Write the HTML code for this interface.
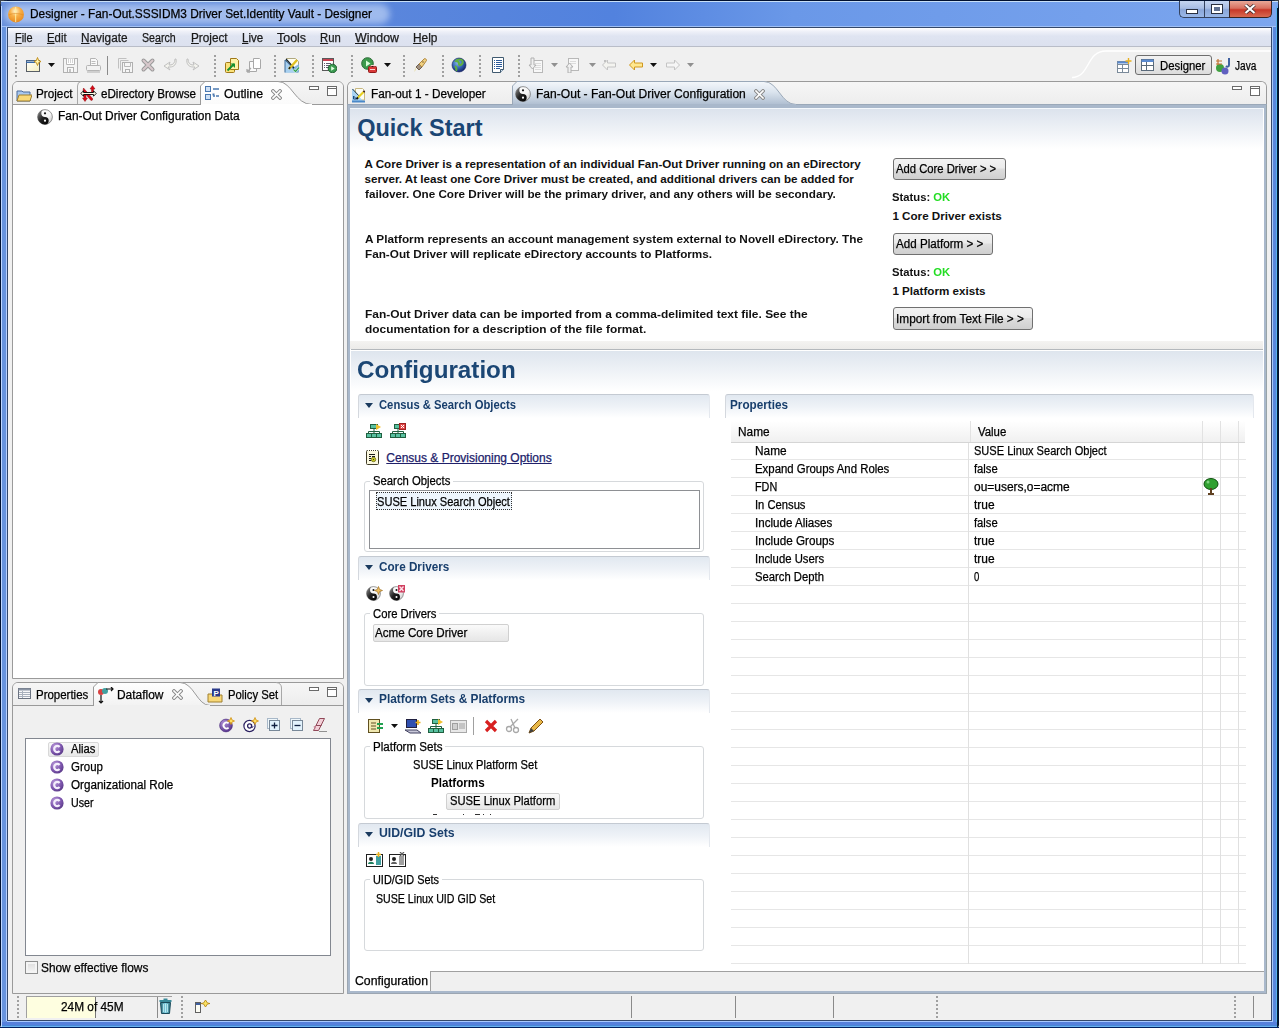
<!DOCTYPE html><html><head><meta charset="utf-8"><style>
html,body{margin:0;padding:0;}
body{width:1279px;height:1028px;overflow:hidden;position:relative;background:#f0f0f0;font-family:"Liberation Sans",sans-serif;}
.a{position:absolute;box-sizing:border-box;}
.t{position:absolute;white-space:pre;line-height:20px;font-family:"Liberation Sans",sans-serif;}
</style></head><body>

<div class="a" style="left:0px;top:0px;width:6px;height:6px;background:#3a4048;"></div>
<div class="a" style="left:1273px;top:0px;width:6px;height:6px;background:#3a4048;"></div>
<div class="a" style="left:0px;top:0px;width:1279px;height:1028px;background:#6292e0;border:1px solid #001030;border-radius:7px 7px 3px 3px;"></div>
<div class="a" style="left:1px;top:1px;width:1277px;height:1px;background:#c8e0f8;"></div>
<div class="a" style="left:1px;top:2px;width:1277px;height:24px;background:linear-gradient(90deg,#6890dc 0%,#5a86dc 30%,#5282de 48%,#6a98e8 62%,#74a0ec 85%,#7ca6ee 100%);"></div>
<div class="a" style="left:1px;top:26px;width:1277px;height:1px;background:#a0c0f4;"></div>
<div class="a" style="left:1px;top:6px;width:1px;height:1021px;background:#c0d8ff;"></div>
<div class="a" style="left:2px;top:27px;width:4px;height:1000px;background:#6894de;"></div>
<div class="a" style="left:6px;top:27px;width:1px;height:994px;background:#b8d0ff;"></div>
<div class="a" style="left:1272px;top:27px;width:1px;height:994px;background:#a8c8f8;"></div>
<div class="a" style="left:1273px;top:27px;width:3px;height:1000px;background:#5a88dc;"></div>
<div class="a" style="left:1276px;top:6px;width:1px;height:1021px;background:#58b0f0;"></div>
<div class="a" style="left:1277px;top:8px;width:1px;height:1020px;background:#002030;"></div>
<div class="a" style="left:7px;top:1021px;width:1266px;height:1px;background:#a8c8ff;"></div>
<div class="a" style="left:2px;top:1022px;width:1275px;height:3px;background:#5580dc;"></div>
<div class="a" style="left:2px;top:1025px;width:1275px;height:1px;background:#4888d8;"></div>
<div class="a" style="left:2px;top:1026px;width:1275px;height:1px;background:#68b0f0;"></div>
<div class="a" style="left:0px;top:1027px;width:1279px;height:1px;background:#002060;"></div>
<div class="a" style="left:7px;top:27px;width:1265px;height:994px;border:1px solid #34486a;background:#f0f0f0;"></div>
<div class="a" style="left:4px;top:4px;width:386px;height:20px;background:rgba(215,230,252,0.55);border-radius:10px;filter:blur(3px);"></div>
<svg class="a" style="left:7px;top:5px" width="18" height="18" viewBox="0 0 18 18"><defs><radialGradient id="ti" cx="45%" cy="30%" r="70%"><stop offset="0" stop-color="#fff4d0"/><stop offset="0.45" stop-color="#f8b048"/><stop offset="1" stop-color="#e88a20"/></radialGradient></defs><circle cx="9" cy="9.4" r="8" fill="url(#ti)"/><path d="M8.6 2v15" stroke="#fff0a0" stroke-width="1.2" opacity="0.8"/><path d="M2 10c3-2 10-2 14 0" stroke="#d88018" stroke-width="0.8" fill="none" opacity="0.6"/></svg>
<div class="t" style="left:30.00px;top:4px;font-size:12px;font-weight:normal;color:#000;transform:scaleX(0.9887);transform-origin:0 0;-webkit-text-stroke:0.25px currentColor;">Designer - Fan-Out.SSSIDM3 Driver Set.Identity Vault - Designer</div>
<div class="a" style="left:1179px;top:1px;width:26px;height:17px;background:linear-gradient(180deg,#c6d6f0 0%,#a8bde4 45%,#8aa6d8 55%,#9ab8e8 100%);border:1px solid #34425e;border-top:none;border-right:none;border-radius:0 0 0 5px;"></div>
<div class="a" style="left:1204px;top:1px;width:26px;height:17px;background:linear-gradient(180deg,#c6d6f0 0%,#a8bde4 45%,#8aa6d8 55%,#9ab8e8 100%);border:1px solid #34425e;border-top:none;border-right:none;"></div>
<div class="a" style="left:1229px;top:1px;width:43px;height:17px;background:linear-gradient(180deg,#e8a898 0%,#d87060 45%,#c83828 55%,#d86a50 100%);border:1px solid #3a2420;border-top:none;border-radius:0 0 5px 0;"></div>
<div class="a" style="left:1186px;top:9px;width:12px;height:5px;background:#fff;border:1px solid #2a3040;"></div>
<div class="a" style="left:1211px;top:4px;width:12px;height:10px;border:1px solid #2a3040;background:#607090;box-shadow:inset 0 0 0 2px #fff;"></div>
<svg class="a" style="left:1244px;top:4px" width="12" height="10" viewBox="0 0 12 10"><path d="M1.5 1L10.5 9M10.5 1L1.5 9" stroke="#3a2a2a" stroke-width="3.6"/><path d="M1.5 1L10.5 9M10.5 1L1.5 9" stroke="#fff" stroke-width="2.2"/></svg>
<div class="a" style="left:8px;top:28px;width:1263px;height:18px;background:linear-gradient(180deg,#ffffff 0%,#eef0f8 20%,#dfe4f1 45%,#dce1ef 100%);"></div>
<div class="a" style="left:8px;top:46px;width:1263px;height:1px;background:#b9bdc8;"></div>
<div class="t" style="left:15.30px;top:28px;font-size:12px;font-weight:normal;color:#1a1a1a;transform:scaleX(0.9110);transform-origin:0 0;-webkit-text-stroke:0.25px currentColor;"><u>F</u>ile</div>
<div class="t" style="left:47.10px;top:28px;font-size:12px;font-weight:normal;color:#1a1a1a;transform:scaleX(0.9469);transform-origin:0 0;-webkit-text-stroke:0.25px currentColor;"><u>E</u>dit</div>
<div class="t" style="left:81.30px;top:28px;font-size:12px;font-weight:normal;color:#1a1a1a;transform:scaleX(0.9823);transform-origin:0 0;-webkit-text-stroke:0.25px currentColor;"><u>N</u>avigate</div>
<div class="t" style="left:142.30px;top:28px;font-size:12px;font-weight:normal;color:#1a1a1a;transform:scaleX(0.8859);transform-origin:0 0;-webkit-text-stroke:0.25px currentColor;">Se<u>a</u>rch</div>
<div class="t" style="left:191.00px;top:28px;font-size:12px;font-weight:normal;color:#1a1a1a;transform:scaleX(0.9807);transform-origin:0 0;-webkit-text-stroke:0.25px currentColor;"><u>P</u>roject</div>
<div class="t" style="left:242.20px;top:28px;font-size:12px;font-weight:normal;color:#1a1a1a;transform:scaleX(0.9628);transform-origin:0 0;-webkit-text-stroke:0.25px currentColor;"><u>L</u>ive</div>
<div class="t" style="left:276.90px;top:28px;font-size:12px;font-weight:normal;color:#1a1a1a;transform:scaleX(1.0385);transform-origin:0 0;-webkit-text-stroke:0.25px currentColor;"><u>T</u>ools</div>
<div class="t" style="left:320.00px;top:28px;font-size:12px;font-weight:normal;color:#1a1a1a;transform:scaleX(0.9401);transform-origin:0 0;-webkit-text-stroke:0.25px currentColor;"><u>R</u>un</div>
<div class="t" style="left:354.80px;top:28px;font-size:12px;font-weight:normal;color:#1a1a1a;transform:scaleX(1.0323);transform-origin:0 0;-webkit-text-stroke:0.25px currentColor;"><u>W</u>indow</div>
<div class="t" style="left:412.90px;top:28px;font-size:12px;font-weight:normal;color:#1a1a1a;transform:scaleX(0.9895);transform-origin:0 0;-webkit-text-stroke:0.25px currentColor;"><u>H</u>elp</div>
<div class="a" style="left:8px;top:47px;width:1263px;height:34px;background:#f0f0f0;"></div>
<div class="a" style="left:15px;top:55px;width:2px;height:22px;background:repeating-linear-gradient(180deg,#a0a0a0 0 2px,transparent 2px 4px);"></div>
<div class="a" style="left:214px;top:55px;width:2px;height:22px;background:repeating-linear-gradient(180deg,#a0a0a0 0 2px,transparent 2px 4px);"></div>
<div class="a" style="left:274px;top:55px;width:2px;height:22px;background:repeating-linear-gradient(180deg,#a0a0a0 0 2px,transparent 2px 4px);"></div>
<div class="a" style="left:312px;top:55px;width:2px;height:22px;background:repeating-linear-gradient(180deg,#a0a0a0 0 2px,transparent 2px 4px);"></div>
<div class="a" style="left:351px;top:55px;width:2px;height:22px;background:repeating-linear-gradient(180deg,#a0a0a0 0 2px,transparent 2px 4px);"></div>
<div class="a" style="left:403px;top:55px;width:2px;height:22px;background:repeating-linear-gradient(180deg,#a0a0a0 0 2px,transparent 2px 4px);"></div>
<div class="a" style="left:442px;top:55px;width:2px;height:22px;background:repeating-linear-gradient(180deg,#a0a0a0 0 2px,transparent 2px 4px);"></div>
<div class="a" style="left:479px;top:55px;width:2px;height:22px;background:repeating-linear-gradient(180deg,#a0a0a0 0 2px,transparent 2px 4px);"></div>
<div class="a" style="left:518px;top:55px;width:2px;height:22px;background:repeating-linear-gradient(180deg,#a0a0a0 0 2px,transparent 2px 4px);"></div>
<svg class="a" style="left:25px;top:57px" width="16" height="16" viewBox="0 0 16 16"><defs><linearGradient id="nwg" x1="0" y1="0" x2="1" y2="1"><stop offset="0" stop-color="#ffffff"/><stop offset="1" stop-color="#f4eec0"/></linearGradient></defs><rect x="1.5" y="3.5" width="13" height="11" fill="url(#nwg)" stroke="#585e66"/><path d="M1 4h9M1 5.5h9" stroke="#3a6aa8"/><path d="M12.5 0.5L13.6 3.4 16 4.5 13.6 5.6 12.5 8.5 11.4 5.6 9 4.5 11.4 3.4Z" fill="#fff6b0" stroke="#c08a10" stroke-width="0.9"/></svg>
<svg class="a" style="left:48px;top:63px" width="7" height="4" viewBox="0 0 7 4"><path d="M0 0H7L3.5 4Z" fill="#111"/></svg>
<svg class="a" style="left:62px;top:57px" width="16" height="16" viewBox="0 0 16 16"><rect x="1.5" y="1.5" width="14" height="14" fill="#f4f4f4" stroke="#b2b2b2"/><path d="M4.5 1.5V7.5H12.5V1.5" fill="#fff" stroke="#b8b8b8"/><path d="M6.5 2v4M8.5 2v4M10.5 2v4" stroke="#d4d4d4"/><rect x="5.5" y="10.5" width="6" height="5" fill="#fafafa" stroke="#b2b2b2"/><rect x="7" y="12" width="2" height="3" fill="#c4c4c4"/></svg>
<svg class="a" style="left:85px;top:57px" width="16" height="16" viewBox="0 0 16 16"><path d="M5.5 8V1.5h5l2 2V8" fill="#fafafa" stroke="#b4b4b4"/><path d="M6.5 4.5h4M6.5 6.5h4" stroke="#bcbcbc"/><rect x="1.5" y="8.5" width="14" height="5" rx="1" fill="#f2f2f2" stroke="#b4b4b4"/><path d="M2 15h13" stroke="#c4c4c4" stroke-width="1.5"/></svg>
<div class="a" style="left:107px;top:56px;width:1px;height:19px;background:#8a8a8a;"></div>
<svg class="a" style="left:117px;top:57px" width="16" height="16" viewBox="0 0 16 16"><path d="M1.5 11.5V1.5H9.5" fill="none" stroke="#c0c0c0"/><path d="M3.5 13.5V3.5H11.5" fill="none" stroke="#c0c0c0"/><rect x="5.5" y="5.5" width="10" height="10" fill="#f6f6f6" stroke="#b0b0b0"/><path d="M7.5 5.5V9.5H13.5V5.5" fill="none" stroke="#b8b8b8"/><rect x="8.5" y="12.5" width="4" height="3" fill="none" stroke="#b0b0b0"/></svg>
<svg class="a" style="left:140px;top:57px" width="16" height="16" viewBox="0 0 16 16"><path d="M3.5 3.5L12.5 12.5M12.5 3.5L3.5 12.5" stroke="#9a9a9a" stroke-width="4" stroke-linecap="round"/><path d="M3.5 3.5L12.5 12.5M12.5 3.5L3.5 12.5" stroke="#d8c8cc" stroke-width="2" stroke-linecap="round"/></svg>
<svg class="a" style="left:162px;top:57px" width="16" height="16" viewBox="0 0 16 16"><path d="M14 2c1 5-2 8-6 8H6l2 3-6-4 6-4-1 3h1c3 0 5-2 5-6z" fill="#f4f4ee" stroke="#c0c0c0"/></svg>
<svg class="a" style="left:185px;top:57px" width="16" height="16" viewBox="0 0 16 16"><path d="M2 2c-1 5 2 8 6 8h2l-2 3 6-4-6-4 1 3H8C5 8 3 6 3 2z" fill="#f4f4ee" stroke="#c0c0c0"/></svg>
<svg class="a" style="left:224px;top:57px" width="16" height="16" viewBox="0 0 16 16"><rect x="1.5" y="5.5" width="9" height="10" rx="1" fill="#fbe27a" stroke="#a07818"/><path d="M6.5 1.5h6l2 2v9h-8z" fill="#fff2a8" stroke="#a07818"/><path d="M3.5 13.5L10 7" stroke="#189030" stroke-width="2"/><path d="M6.5 6.5h4.5v4.5z" fill="#189030"/></svg>
<svg class="a" style="left:246px;top:57px" width="16" height="16" viewBox="0 0 16 16"><path d="M3.5 4.5h6l1 1v9h-7z" fill="#fafafa" stroke="#a8a8a8"/><path d="M7.5 1.5h6l1 1v9h-7z" fill="#fff" stroke="#a8a8a8"/><path d="M1 15l4-4M1 15h3M1 15v-3" stroke="#a8a8a8" stroke-width="1.3"/></svg>
<svg class="a" style="left:284px;top:57px" width="16" height="16" viewBox="0 0 16 16"><path d="M2.5 1.5h9l3 3v10h-12z" fill="#fffef0" stroke="#b0a880"/><path d="M1 15.5h14V7z" fill="#7ab0e0" opacity="0.9"/><path d="M1 15.5V3L13 15.5" fill="#a8d0f0" stroke="#3a6a98"/><path d="M2 2l8 9" stroke="#102030" stroke-width="1.2"/><path d="M5 12l8-9" stroke="#e0c020" stroke-width="2.4"/><path d="M5 12l1-2" stroke="#202020" stroke-width="1.5"/><path d="M9.5 12.5l2 2 3.5-4" stroke="#fff" stroke-width="2" fill="none"/><path d="M9.5 12.5l2 2 3.5-4" stroke="#30a050" stroke-width="1.2" fill="none"/></svg>
<svg class="a" style="left:321px;top:57px" width="16" height="16" viewBox="0 0 16 16"><rect x="1.5" y="1.5" width="11" height="12" fill="#fff" stroke="#5a5a5a"/><rect x="2" y="2" width="10" height="2" fill="#c84050"/><path d="M3 6.5h1M5 6.5h5M3 8.5h1M5 8.5h5M3 10.5h1M5 10.5h3" stroke="#606070"/><circle cx="11.5" cy="11.5" r="4.3" fill="#3a9a50" stroke="#206030"/><path d="M10.2 9.3v4.4l3.5-2.2z" fill="#e0ffe0"/></svg>
<svg class="a" style="left:361px;top:57px" width="16" height="16" viewBox="0 0 16 16"><circle cx="6.5" cy="6.5" r="5.8" fill="#3c9a4c" stroke="#2a6a34"/><path d="M5 3.5v6l4.5-3z" fill="#d8ffd8"/><rect x="7.5" y="9.5" width="8" height="6" rx="1" fill="#d83838" stroke="#901818"/><path d="M9 12.5h5M10 9.5v-1h3v1" stroke="#ffd0d0"/></svg>
<svg class="a" style="left:384px;top:63px" width="7" height="4" viewBox="0 0 7 4"><path d="M0 0H7L3.5 4Z" fill="#111"/></svg>
<svg class="a" style="left:412px;top:57px" width="16" height="16" viewBox="0 0 16 16"><path d="M4 13l-2 2 1-3 1-2z" fill="#e8e0b0"/><path d="M4 10l3-3 3 3-3 3z" fill="#a09080" stroke="#706050"/><path d="M7 7l5-5c1-1 2.5 0 2.5 1.5L10 10z" fill="#f0d080" stroke="#b08840"/><circle cx="11" cy="5" r="0.8" fill="#806030"/></svg>
<svg class="a" style="left:451px;top:57px" width="16" height="16" viewBox="0 0 16 16"><defs><radialGradient id="glg" cx="40%" cy="35%" r="65%"><stop offset="0" stop-color="#8ab8f0"/><stop offset="0.6" stop-color="#3060b0"/><stop offset="1" stop-color="#182870"/></radialGradient></defs><circle cx="8" cy="8" r="7" fill="url(#glg)"/><path d="M5 4c2 0 3 1 3 3s2 1 3 0 1-3 0-4c-2-1-5-1-6 1zM4 9c1 1 2 3 1 5" stroke="#60b040" stroke-width="2" fill="none"/><circle cx="8" cy="8" r="7" fill="none" stroke="#102060" stroke-width="0.6"/></svg>
<svg class="a" style="left:490px;top:57px" width="16" height="16" viewBox="0 0 16 16"><path d="M2.5 0.5h11v12l-3 3h-8z" fill="#fff" stroke="#405a70"/><path d="M10.5 15.5v-3h3" fill="#d0e0f0" stroke="#405a70"/><path d="M4 3.5h1M6 3.5h6M4 5.5h1M6 5.5h6M4 7.5h1M6 7.5h6M4 9.5h1M6 9.5h6M4 11.5h1M6 11.5h4" stroke="#2a5a9a"/></svg>
<svg class="a" style="left:528px;top:57px" width="16" height="16" viewBox="0 0 16 16"><rect x="5.5" y="3.5" width="9" height="12" fill="#f8f8f8" stroke="#b8b8b8"/><path d="M7 6.5h6M7 8.5h6M7 10.5h6M7 12.5h6" stroke="#dcdcdc"/><path d="M3 1v7H1l3.5 4L8 8H6V1z" fill="#f0f0f0" stroke="#b0b0b0"/></svg>
<svg class="a" style="left:551px;top:63px" width="7" height="4" viewBox="0 0 7 4"><path d="M0 0H7L3.5 4Z" fill="#909090"/></svg>
<svg class="a" style="left:565px;top:57px" width="16" height="16" viewBox="0 0 16 16"><rect x="3.5" y="1.5" width="10" height="12" fill="#f8f8f8" stroke="#b8b8b8"/><path d="M5 4.5h6M5 6.5h6" stroke="#dcdcdc"/><path d="M4.5 6L1 10h2v6h3v-6h2z" fill="#f0f0f0" stroke="#b0b0b0"/></svg>
<svg class="a" style="left:589px;top:63px" width="7" height="4" viewBox="0 0 7 4"><path d="M0 0H7L3.5 4Z" fill="#909090"/></svg>
<svg class="a" style="left:601px;top:57px" width="16" height="16" viewBox="0 0 16 16"><path d="M1.5 8l5-5v3h8v4h-8v3z" fill="#f4f4f0" stroke="#c4c4c4"/><path d="M3 3l2 2M5 3L3 5" stroke="#c0c0c0"/></svg>
<svg class="a" style="left:628px;top:57px" width="16" height="16" viewBox="0 0 16 16"><path d="M1.5 8l5-5v3h8v4h-8v3z" fill="#ffe890" stroke="#d09820"/></svg>
<svg class="a" style="left:650px;top:63px" width="7" height="4" viewBox="0 0 7 4"><path d="M0 0H7L3.5 4Z" fill="#111"/></svg>
<svg class="a" style="left:665px;top:57px" width="16" height="16" viewBox="0 0 16 16"><path d="M14.5 8l-5-5v3h-8v4h8v3z" fill="#f6f6f6" stroke="#c4c4c4"/></svg>
<svg class="a" style="left:687px;top:63px" width="7" height="4" viewBox="0 0 7 4"><path d="M0 0H7L3.5 4Z" fill="#909090"/></svg>
<svg class="a" style="left:900px;top:47px" width="371" height="34" viewBox="0 0 371 34"><defs><linearGradient id="pbl" x1="0" y1="0" x2="1" y2="0"><stop offset="0" stop-color="#fff" stop-opacity="0"/><stop offset="1" stop-color="#fff" stop-opacity="0.9"/></linearGradient></defs><path d="M0 30.5H172" stroke="url(#pbl)" stroke-width="1.2" fill="none"/><path d="M172 30.5C190 30.5 186 4 206 4H371" fill="none" stroke="#ffffff" stroke-width="1.4"/></svg>
<svg class="a" style="left:1116px;top:58px" width="16" height="16" viewBox="0 0 16 16"><rect x="1.5" y="3.5" width="11" height="11" fill="#fff" stroke="#7a8a9a"/><path d="M1.5 6.5h11M6.5 6.5v8M1.5 10.5h11" stroke="#7a8a9a"/><rect x="1.5" y="3.5" width="11" height="2" fill="#5a8ad0"/><path d="M12.5 0v6M9.5 3h6" stroke="#e8b020" stroke-width="1.4"/></svg>
<div class="a" style="left:1135px;top:55px;width:77px;height:20px;background:linear-gradient(180deg,#f2f2f2,#dcdcdc);border:1px solid #6e6e6e;border-radius:3px;"></div>
<svg class="a" style="left:1141px;top:58px" width="14" height="14" viewBox="0 0 14 14"><rect x="0.5" y="1.5" width="12" height="11" fill="#fff" stroke="#5a6a7a"/><rect x="0.5" y="1.5" width="12" height="2.5" fill="#5a8ad0"/><path d="M0.5 7.5h12M5.5 4v8.5" stroke="#5a6a7a"/></svg>
<div class="t" style="left:1159.50px;top:56px;font-size:12px;font-weight:normal;color:#000;transform:scaleX(0.9437);transform-origin:0 0;-webkit-text-stroke:0.25px currentColor;">Designer</div>
<svg class="a" style="left:1215px;top:57px" width="18" height="18" viewBox="0 0 18 18"><circle cx="5" cy="11" r="4" fill="#40a040"/><circle cx="10" cy="14" r="3.5" fill="#6060c0"/><path d="M3 2v6M1 4h6M1 7h6" stroke="#c07030" stroke-width="1.2"/><path d="M14 1v7c0 2-2 2-3 1" stroke="#4060a0" stroke-width="2" fill="none"/></svg>
<div class="t" style="left:1235.00px;top:56px;font-size:12px;font-weight:normal;color:#000;transform:scaleX(0.8392);transform-origin:0 0;-webkit-text-stroke:0.25px currentColor;">Java</div>
<div class="a" style="left:12px;top:81px;width:332px;height:598px;border:1px solid #9a9a9a;border-radius:6px 6px 0 0;background:#f0f0f0;"></div>
<div class="a" style="left:13px;top:82px;width:330px;height:22px;background:linear-gradient(180deg,#f6f6f6,#ededed);border-radius:5px 5px 0 0;"></div>
<div class="a" style="left:13px;top:105px;width:330px;height:573px;background:#fff;"></div>
<svg class="a" style="left:12px;top:81px" width="332" height="25" viewBox="0 0 332 25"><defs><linearGradient id="g1" x1="0" y1="0" x2="0" y2="1"><stop offset="0" stop-color="#ffffff"/><stop offset="1" stop-color="#fbfbfb"/></linearGradient></defs><path d="M0.5 23.5 H188.5" stroke="#9a9a9a" fill="none"/><path d="M188.5 24 V5 L193 0.5 H266 C280 0.5 283 23.5 300 23.5 H331" fill="url(#g1)" stroke="#9a9a9a"/><rect x="189" y="23" width="111" height="3" fill="#fff"/><path d="M65.5 5 V23 M65.5 5 Q65.5 1 69 0.5" stroke="#a8a8a8" fill="none"/></svg>
<svg class="a" style="left:16px;top:88px" width="16" height="14" viewBox="0 0 16 14"><path d="M1 3h5l1 1h7v9H1z" fill="#a8c8f0" stroke="#4a6a9a"/><path d="M1 13l2-6h13l-2 6z" fill="#f8d878" stroke="#a08030"/></svg>
<div class="t" style="left:36.40px;top:84px;font-size:12px;font-weight:normal;color:#000;transform:scaleX(0.9780);transform-origin:0 0;-webkit-text-stroke:0.25px currentColor;">Project</div>
<svg class="a" style="left:80px;top:85px" width="17" height="17" viewBox="0 0 17 17"><path d="M3.5 3L12.5 13.5V15L11 15.5 3 6Z" fill="#d80818" stroke="#901010" stroke-width="0.5"/><path d="M11.5 9V4H10L12.5 0.5 15 4H13.5V9z" fill="#d80818" stroke="#901010" stroke-width="0.5"/><path d="M4 9V13H2.5L5 16.5 7.5 13H6V9z" fill="#d80818" stroke="#901010" stroke-width="0.5"/><path d="M0.8 8.5L3.5 5.8V7.5H13.5V5.8L16.2 8.5 13.5 11.2V9.5H3.5V11.2Z" fill="#fffbe8" stroke="#000" stroke-width="0.9"/></svg>
<div class="t" style="left:101.00px;top:84px;font-size:12px;font-weight:normal;color:#000;transform:scaleX(0.9690);transform-origin:0 0;-webkit-text-stroke:0.25px currentColor;">eDirectory Browse</div>
<svg class="a" style="left:205px;top:86px" width="15" height="15" viewBox="0 0 15 15"><rect x="0.5" y="0.5" width="5" height="5" fill="#cfe0f4" stroke="#4a78b0"/><rect x="0.5" y="8.5" width="5" height="5" fill="#cfe0f4" stroke="#4a78b0"/><path d="M8 3h6M8 10h2M11 10h3" stroke="#4a78b0" stroke-width="1.5"/><rect x="7.5" y="7.5" width="2" height="2" fill="#4a78b0"/></svg>
<div class="t" style="left:224.00px;top:84px;font-size:12px;font-weight:normal;color:#000;transform:scaleX(1.0252);transform-origin:0 0;-webkit-text-stroke:0.25px currentColor;">Outline</div>
<svg class="a" style="left:271px;top:89px" width="11" height="11" viewBox="0 0 11 11"><path d="M2 2L9 9M9 2L2 9" stroke="#8a8a8a" stroke-width="3.6" stroke-linecap="square"/><path d="M2 2L9 9M9 2L2 9" stroke="#fff" stroke-width="1.6" stroke-linecap="square"/></svg>
<div class="a" style="left:309px;top:86px;width:10px;height:4px;border:1px solid #6a6a6a;background:#fff;"></div>
<div class="a" style="left:327px;top:86px;width:10px;height:10px;border:1px solid #6a6a6a;background:linear-gradient(180deg,#fff 0 1px,#6a6a6a 1px 2px,#fff 2px);"></div>
<svg class="a" style="left:37px;top:109px" width="16" height="16" viewBox="0 0 16 16"><defs><linearGradient id="yy37_109a" x1="0" y1="0" x2="1" y2="1"><stop offset="0" stop-color="#9a9a9a"/><stop offset="0.5" stop-color="#222"/><stop offset="1" stop-color="#000"/></linearGradient><linearGradient id="yy37_109b" x1="0" y1="0" x2="1" y2="1"><stop offset="0" stop-color="#fff"/><stop offset="0.6" stop-color="#f4f4f4"/><stop offset="1" stop-color="#b8b8b8"/></linearGradient></defs><g transform="scale(1.0)"><circle cx="8" cy="8" r="7.4" fill="url(#yy37_109b)" stroke="#555" stroke-width="0.6"/><path d="M8 0.6 A7.4 7.4 0 0 0 8 15.4 A3.7 3.7 0 0 0 8 8 A3.7 3.7 0 0 1 8 0.6Z" fill="url(#yy37_109a)"/><circle cx="8" cy="4.3" r="1.1" fill="#111"/><circle cx="8" cy="11.7" r="1.1" fill="#fff"/></g></svg>
<div class="t" style="left:58.30px;top:106px;font-size:12px;font-weight:normal;color:#000;transform:scaleX(0.9939);transform-origin:0 0;-webkit-text-stroke:0.25px currentColor;">Fan-Out Driver Configuration Data</div>
<div class="a" style="left:12px;top:682px;width:332px;height:312px;border:1px solid #9a9a9a;border-radius:6px 6px 0 0;background:#f0f0f0;"></div>
<div class="a" style="left:13px;top:683px;width:330px;height:22px;background:linear-gradient(180deg,#f6f6f6,#ededed);border-radius:5px 5px 0 0;"></div>
<svg class="a" style="left:12px;top:682px" width="332" height="26" viewBox="0 0 332 26"><defs><linearGradient id="g2" x1="0" y1="0" x2="0" y2="1"><stop offset="0" stop-color="#ffffff"/><stop offset="1" stop-color="#f2f2f2"/></linearGradient></defs><path d="M0.5 23.5 H81.5" stroke="#9a9a9a" fill="none"/><path d="M81.5 24 V5 L86 0.5 H168 C182 0.5 185 23.5 198 23.5 H331" fill="url(#g2)" stroke="#9a9a9a"/><rect x="82" y="23" width="116" height="3" fill="#f0f0f0"/><path d="M269.5 23 V6 Q269.5 1 264 0.5" stroke="#a8a8a8" fill="none"/></svg>
<svg class="a" style="left:18px;top:688px" width="14" height="12" viewBox="0 0 14 12"><rect x="0.5" y="0.5" width="12" height="10" fill="#f8f8fa" stroke="#6a7280"/><rect x="0.5" y="0.5" width="12" height="2" fill="#8a94a4"/><path d="M1 4.5h11M1 6.5h11M1 8.5h11M4.5 3v7" stroke="#a8b0bc"/></svg>
<div class="t" style="left:36.40px;top:685px;font-size:12px;font-weight:normal;color:#000;transform:scaleX(0.9558);transform-origin:0 0;-webkit-text-stroke:0.25px currentColor;">Properties</div>
<svg class="a" style="left:97px;top:687px" width="17" height="17" viewBox="0 0 17 17"><circle cx="4" cy="5" r="3" fill="#d84040"/><circle cx="8" cy="4" r="3" fill="#40a0a0"/><path d="M4 8v8M2 14l2 2 2-2M9 2h7M14 0l2 2-2 2" stroke="#111" stroke-width="1.2" fill="none"/></svg>
<div class="t" style="left:117.30px;top:685px;font-size:12px;font-weight:normal;color:#000;transform:scaleX(0.9949);transform-origin:0 0;-webkit-text-stroke:0.25px currentColor;">Dataflow</div>
<svg class="a" style="left:172px;top:689px" width="11" height="11" viewBox="0 0 11 11"><path d="M2 2L9 9M9 2L2 9" stroke="#8a8a8a" stroke-width="3.6" stroke-linecap="square"/><path d="M2 2L9 9M9 2L2 9" stroke="#fff" stroke-width="1.6" stroke-linecap="square"/></svg>
<svg class="a" style="left:207px;top:688px" width="16" height="15" viewBox="0 0 16 15"><path d="M1 6h5l1 1h8v7H1z" fill="#f8d878" stroke="#a08030"/><rect x="5" y="0.5" width="8" height="8" fill="#2a3a8a"/><text x="6.5" y="7.5" font-size="8" font-weight="bold" fill="#fff" font-family="Liberation Sans">P</text></svg>
<div class="t" style="left:227.60px;top:685px;font-size:12px;font-weight:normal;color:#000;transform:scaleX(0.9411);transform-origin:0 0;-webkit-text-stroke:0.25px currentColor;">Policy Set</div>
<div class="a" style="left:309px;top:687px;width:10px;height:4px;border:1px solid #6a6a6a;background:#fff;"></div>
<div class="a" style="left:327px;top:687px;width:10px;height:10px;border:1px solid #6a6a6a;background:linear-gradient(180deg,#fff 0 1px,#6a6a6a 1px 2px,#fff 2px);"></div>
<svg class="a" style="left:219px;top:717px" width="16" height="16" viewBox="0 0 16 16"><defs><radialGradient id="cpg" cx="35%" cy="30%" r="70%"><stop offset="0" stop-color="#b090d8"/><stop offset="1" stop-color="#5a3890"/></radialGradient></defs><circle cx="7" cy="8.5" r="6.4" fill="url(#cpg)" stroke="#4a2a7a" stroke-width="0.6"/><path d="M9.6 6.3A3 3 0 1 0 9.6 10.7" fill="none" stroke="#fff" stroke-width="1.8"/><path d="M12 0.5L13 3 15.5 4 13 5 12 7.5 11 5 8.5 4 11 3Z" fill="#ffe060" stroke="#d09010" stroke-width="0.8"/></svg>
<svg class="a" style="left:243px;top:717px" width="16" height="16" viewBox="0 0 16 16"><circle cx="6.5" cy="9" r="5.6" fill="#fff" stroke="#2a2060" stroke-width="1.2"/><path d="M8.6 7.2v2.6c0 1 1.4 1 1.4-0.6" fill="none" stroke="#2a2060" stroke-width="1"/><ellipse cx="6.6" cy="9" rx="2" ry="2.1" fill="none" stroke="#2a2060" stroke-width="1.3"/><path d="M12 0.5L13 3 15.5 4 13 5 12 7.5 11 5 8.5 4 11 3Z" fill="#ffe060" stroke="#d09010" stroke-width="0.8"/></svg>
<svg class="a" style="left:266px;top:717px" width="16" height="16" viewBox="0 0 16 16"><rect x="1.5" y="1.5" width="10" height="10" fill="#f0f8fc" stroke="#a8b8c8"/><rect x="3.5" y="3.5" width="10" height="10" fill="#e2f2fc" stroke="#788898"/><path d="M5.5 8.5h6M8.5 5.5v6" stroke="#102040" stroke-width="1.3"/></svg>
<svg class="a" style="left:289px;top:717px" width="16" height="16" viewBox="0 0 16 16"><rect x="1.5" y="1.5" width="10" height="10" fill="#f0f8fc" stroke="#a8b8c8"/><rect x="3.5" y="3.5" width="10" height="10" fill="#e2f2fc" stroke="#788898"/><path d="M5.5 8.5h6" stroke="#102040" stroke-width="1.3"/></svg>
<svg class="a" style="left:312px;top:717px" width="16" height="16" viewBox="0 0 16 16"><path d="M1.5 13.5L7.5 1.5h5l-6 12z" fill="#f2d0d8" stroke="#904858"/><path d="M4 8.5h5.5" stroke="#904858"/><path d="M1.5 9.5L4 8.5 3 13z" fill="#c88898"/><path d="M7 14.5h8" stroke="#909090"/></svg>
<div class="a" style="left:25px;top:738px;width:306px;height:218px;border:1px solid #828790;background:#fff;"></div>
<div class="a" style="left:48px;top:742px;width:51px;height:15px;background:linear-gradient(180deg,#f8f8f8,#e8e8e8);border:1px solid #d8d8d8;border-radius:2px;"></div>
<svg class="a" style="left:50px;top:742px" width="14" height="14" viewBox="0 0 14 14"><defs><radialGradient id="cg0" cx="35%" cy="30%" r="75%"><stop offset="0" stop-color="#b898d8"/><stop offset="0.6" stop-color="#8058b0"/><stop offset="1" stop-color="#5a3a88"/></radialGradient></defs><circle cx="7" cy="7" r="6.6" fill="url(#cg0)"/><path d="M9.6 4.9A3.1 3.1 0 1 0 9.6 9.1" fill="none" stroke="#f4eefc" stroke-width="2.2"/></svg>
<div class="t" style="left:70.60px;top:739px;font-size:12px;font-weight:normal;color:#000;transform:scaleX(0.9370);transform-origin:0 0;-webkit-text-stroke:0.25px currentColor;">Alias</div>
<svg class="a" style="left:50px;top:760px" width="14" height="14" viewBox="0 0 14 14"><defs><radialGradient id="cg1" cx="35%" cy="30%" r="75%"><stop offset="0" stop-color="#b898d8"/><stop offset="0.6" stop-color="#8058b0"/><stop offset="1" stop-color="#5a3a88"/></radialGradient></defs><circle cx="7" cy="7" r="6.6" fill="url(#cg1)"/><path d="M9.6 4.9A3.1 3.1 0 1 0 9.6 9.1" fill="none" stroke="#f4eefc" stroke-width="2.2"/></svg>
<div class="t" style="left:70.60px;top:757px;font-size:12px;font-weight:normal;color:#000;transform:scaleX(0.9562);transform-origin:0 0;-webkit-text-stroke:0.25px currentColor;">Group</div>
<svg class="a" style="left:50px;top:778px" width="14" height="14" viewBox="0 0 14 14"><defs><radialGradient id="cg2" cx="35%" cy="30%" r="75%"><stop offset="0" stop-color="#b898d8"/><stop offset="0.6" stop-color="#8058b0"/><stop offset="1" stop-color="#5a3a88"/></radialGradient></defs><circle cx="7" cy="7" r="6.6" fill="url(#cg2)"/><path d="M9.6 4.9A3.1 3.1 0 1 0 9.6 9.1" fill="none" stroke="#f4eefc" stroke-width="2.2"/></svg>
<div class="t" style="left:70.60px;top:775px;font-size:12px;font-weight:normal;color:#000;transform:scaleX(0.9704);transform-origin:0 0;-webkit-text-stroke:0.25px currentColor;">Organizational Role</div>
<svg class="a" style="left:50px;top:796px" width="14" height="14" viewBox="0 0 14 14"><defs><radialGradient id="cg3" cx="35%" cy="30%" r="75%"><stop offset="0" stop-color="#b898d8"/><stop offset="0.6" stop-color="#8058b0"/><stop offset="1" stop-color="#5a3a88"/></radialGradient></defs><circle cx="7" cy="7" r="6.6" fill="url(#cg3)"/><path d="M9.6 4.9A3.1 3.1 0 1 0 9.6 9.1" fill="none" stroke="#f4eefc" stroke-width="2.2"/></svg>
<div class="t" style="left:70.60px;top:793px;font-size:12px;font-weight:normal;color:#000;transform:scaleX(0.8886);transform-origin:0 0;-webkit-text-stroke:0.25px currentColor;">User</div>
<div class="a" style="left:25px;top:961px;width:13px;height:13px;border:1px solid #8e8f8f;background:linear-gradient(180deg,#dcdcdc,#f6f6f6);box-shadow:inset 0 0 0 2px #f4f4f4;"></div>
<div class="t" style="left:41.20px;top:958px;font-size:12px;font-weight:normal;color:#000;transform:scaleX(0.9891);transform-origin:0 0;-webkit-text-stroke:0.25px currentColor;">Show effective flows</div>
<div class="a" style="left:347px;top:81px;width:920px;height:913px;background:#f0f0f0;border-radius:6px 6px 0 0;border:1px solid #9a9a9a;border-bottom:none;"></div>
<div class="a" style="left:348px;top:82px;width:918px;height:22px;background:linear-gradient(180deg,#f6f6f6,#ededed);border-radius:5px 5px 0 0;"></div>
<div class="a" style="left:347px;top:104px;width:920px;height:890px;background:#a9b8cb;"></div>
<div class="a" style="left:347px;top:104px;width:920px;height:1px;background:#97a6b8;"></div>
<div class="a" style="left:347px;top:104px;width:1px;height:890px;background:#9ca6b2;"></div>
<div class="a" style="left:1266px;top:104px;width:1px;height:890px;background:#98a4a8;"></div>
<div class="a" style="left:347px;top:993px;width:920px;height:1px;background:#9ca6b2;"></div>
<div class="a" style="left:350px;top:108px;width:914px;height:1px;background:#f4f8fc;"></div>
<div class="a" style="left:350px;top:109px;width:914px;height:862px;background:#fff;"></div>
<svg class="a" style="left:347px;top:81px" width="920" height="25" viewBox="0 0 920 25"><defs><linearGradient id="g3" x1="0" y1="0" x2="0" y2="1"><stop offset="0" stop-color="#f4f7fb"/><stop offset="0.45" stop-color="#dbe4ee"/><stop offset="1" stop-color="#aebdd0"/></linearGradient></defs><path d="M165.5 24 V5 L170 0.5 H417 C431 0.5 434 23.5 449 23.5 H920" fill="url(#g3)" stroke="#9aa8b8"/><rect x="166" y="23" width="283" height="2" fill="#a9b8cb"/></svg>
<svg class="a" style="left:351px;top:87px" width="17" height="16" viewBox="0 0 17 16"><path d="M4.5 1.5h7l2 2v9.5h-9z" fill="#fcfcf4" stroke="#c8b880"/><path d="M1 1.5V14h11z" fill="#a8d4f4"/><path d="M1.5 2l7.5 8" stroke="#103040" stroke-width="1"/><path d="M2.5 12V9l3 3z" fill="none" stroke="#1a4a80"/><path d="M6.5 11l6-6" stroke="#e8d020" stroke-width="2.2"/><path d="M12.5 5l1-1" stroke="#301010" stroke-width="2"/><path d="M5.5 12l1.5-1.5" stroke="#101010" stroke-width="1.8"/><rect x="1" y="13.5" width="13" height="2" fill="#4a88c8"/></svg>
<div class="t" style="left:371.30px;top:84px;font-size:12px;font-weight:normal;color:#000;transform:scaleX(0.9829);transform-origin:0 0;-webkit-text-stroke:0.25px currentColor;">Fan-out 1 - Developer</div>
<svg class="a" style="left:515px;top:86px" width="16" height="16" viewBox="0 0 16 16"><defs><linearGradient id="yy515_86a" x1="0" y1="0" x2="1" y2="1"><stop offset="0" stop-color="#9a9a9a"/><stop offset="0.5" stop-color="#222"/><stop offset="1" stop-color="#000"/></linearGradient><linearGradient id="yy515_86b" x1="0" y1="0" x2="1" y2="1"><stop offset="0" stop-color="#fff"/><stop offset="0.6" stop-color="#f4f4f4"/><stop offset="1" stop-color="#b8b8b8"/></linearGradient></defs><g transform="scale(1.0)"><circle cx="8" cy="8" r="7.4" fill="url(#yy515_86b)" stroke="#555" stroke-width="0.6"/><path d="M8 0.6 A7.4 7.4 0 0 0 8 15.4 A3.7 3.7 0 0 0 8 8 A3.7 3.7 0 0 1 8 0.6Z" fill="url(#yy515_86a)"/><circle cx="8" cy="4.3" r="1.1" fill="#111"/><circle cx="8" cy="11.7" r="1.1" fill="#fff"/></g></svg>
<div class="t" style="left:536.00px;top:84px;font-size:12px;font-weight:normal;color:#000;transform:scaleX(1.0051);transform-origin:0 0;-webkit-text-stroke:0.25px currentColor;">Fan-Out - Fan-Out Driver Configuration</div>
<svg class="a" style="left:754px;top:89px" width="11" height="11" viewBox="0 0 11 11"><path d="M2 2L9 9M9 2L2 9" stroke="#8a8a8a" stroke-width="3.6" stroke-linecap="square"/><path d="M2 2L9 9M9 2L2 9" stroke="#fff" stroke-width="1.6" stroke-linecap="square"/></svg>
<div class="a" style="left:1232px;top:86px;width:10px;height:4px;border:1px solid #6a6a6a;background:#fff;"></div>
<div class="a" style="left:1250px;top:86px;width:10px;height:10px;border:1px solid #6a6a6a;background:linear-gradient(180deg,#fff 0 1px,#6a6a6a 1px 2px,#fff 2px);"></div>
<div class="a" style="left:350px;top:109px;width:913px;height:40px;background:linear-gradient(180deg,#dce3ed,#ffffff);"></div>
<div class="t" style="left:357.20px;top:118px;font-size:23.5px;font-weight:bold;color:#1b4674;">Quick Start</div>
<div class="t" style="left:364.50px;top:154px;font-size:11.65px;font-weight:bold;color:#111;">A Core Driver is a representation of an individual Fan-Out Driver running on an eDirectory</div>
<div class="t" style="left:364.50px;top:169px;font-size:11.65px;font-weight:bold;color:#111;">server. At least one Core Driver must be created, and additional drivers can be added for</div>
<div class="t" style="left:364.50px;top:184px;font-size:11.65px;font-weight:bold;color:#111;transform:scaleX(1.0043);transform-origin:0 0;">failover. One Core Driver will be the primary driver, and any others will be secondary.</div>
<div class="t" style="left:364.50px;top:229px;font-size:11.65px;font-weight:bold;color:#111;transform:scaleX(1.0129);transform-origin:0 0;">A Platform represents an account management system external to Novell eDirectory. The</div>
<div class="t" style="left:364.50px;top:244px;font-size:11.65px;font-weight:bold;color:#111;transform:scaleX(1.0086);transform-origin:0 0;">Fan-Out Driver will replicate eDirectory accounts to Platforms.</div>
<div class="t" style="left:364.50px;top:304px;font-size:11.65px;font-weight:bold;color:#111;transform:scaleX(1.0259);transform-origin:0 0;">Fan-Out Driver data can be imported from a comma-delimited text file. See the</div>
<div class="t" style="left:364.50px;top:319px;font-size:11.65px;font-weight:bold;color:#111;transform:scaleX(1.0208);transform-origin:0 0;">documentation for a description of the file format.</div>
<div class="a" style="left:893px;top:158px;width:113px;height:22px;background:linear-gradient(180deg,#f2f2f2 0%,#ebebeb 45%,#dddddd 50%,#cfcfcf 100%);border:1px solid #707070;border-radius:3px;"></div>
<div class="t" style="left:895.70px;top:159px;font-size:12px;font-weight:normal;color:#000;transform:scaleX(0.9387);transform-origin:0 0;-webkit-text-stroke:0.25px currentColor;">Add Core Driver &gt; &gt;</div>
<div class="t" style="left:892.40px;top:187px;font-size:11.65px;font-weight:bold;color:#111;transform:scaleX(0.9672);transform-origin:0 0;">Status: <span style="color:#22dd22">OK</span></div>
<div class="t" style="left:892.40px;top:206px;font-size:11.65px;font-weight:bold;color:#111;">1 Core Driver exists</div>
<div class="a" style="left:893px;top:233px;width:100px;height:22px;background:linear-gradient(180deg,#f2f2f2 0%,#ebebeb 45%,#dddddd 50%,#cfcfcf 100%);border:1px solid #707070;border-radius:3px;"></div>
<div class="t" style="left:895.70px;top:234px;font-size:12px;font-weight:normal;color:#000;transform:scaleX(0.9694);transform-origin:0 0;-webkit-text-stroke:0.25px currentColor;">Add Platform &gt; &gt;</div>
<div class="t" style="left:892.40px;top:262px;font-size:11.65px;font-weight:bold;color:#111;transform:scaleX(0.9672);transform-origin:0 0;">Status: <span style="color:#22dd22">OK</span></div>
<div class="t" style="left:892.40px;top:281px;font-size:11.65px;font-weight:bold;color:#111;">1 Platform exists</div>
<div class="a" style="left:893px;top:307px;width:140px;height:23px;background:linear-gradient(180deg,#f2f2f2 0%,#ebebeb 45%,#dddddd 50%,#cfcfcf 100%);border:1px solid #707070;border-radius:3px;"></div>
<div class="t" style="left:895.70px;top:309px;font-size:12px;font-weight:normal;color:#000;transform:scaleX(0.9858);transform-origin:0 0;-webkit-text-stroke:0.25px currentColor;">Import from Text File &gt; &gt;</div>
<div class="a" style="left:350px;top:341px;width:913px;height:8px;background:linear-gradient(180deg,#f4f3f1,#ecebe9);"></div>
<div class="a" style="left:351px;top:349px;width:912px;height:1px;background:#b4b8bc;"></div>
<div class="a" style="left:351px;top:350px;width:912px;height:1px;background:#fff;"></div>
<div class="a" style="left:351px;top:351px;width:912px;height:40px;background:linear-gradient(180deg,#dee5ee,#ffffff);"></div>
<div class="t" style="left:356.70px;top:360px;font-size:24px;font-weight:bold;color:#1b4674;transform:scaleX(1.0088);transform-origin:0 0;">Configuration</div>
<div class="a" style="left:358px;top:394px;width:352px;height:24px;background:linear-gradient(180deg,#e1e8f0 0%,#eef2f7 50%,#ffffff 100%);border-top:1px solid #c4cad2;border-left:1px solid #d4d8de;border-right:1px solid #e4e8ee;border-radius:3px 3px 0 0;"></div>
<svg class="a" style="left:365px;top:403px" width="8" height="5" viewBox="0 0 8 5"><path d="M0 0H8L4 5Z" fill="#1a3a5e"/></svg>
<div class="t" style="left:379.00px;top:395px;font-size:12.4px;font-weight:bold;color:#183e6c;transform:scaleX(0.9078);transform-origin:0 0;">Census &amp; Search Objects</div>
<svg class="a" style="left:366px;top:423px" width="17" height="16" viewBox="0 0 17 16"><rect x="4.5" y="1.5" width="7" height="4" fill="#58c0a0" stroke="#206040"/><path d="M8 5.5v3M2.5 8.5h11M2.5 8.5v2M8 8.5v2M13.5 8.5v2" stroke="#206040"/><rect x="0.5" y="10.5" width="5" height="4" fill="#58c0a0" stroke="#206040"/><rect x="5.5" y="10.5" width="5" height="4" fill="#58c0a0" stroke="#206040"/><rect x="10.5" y="10.5" width="5" height="4" fill="#58c0a0" stroke="#206040"/><path d="M10 1l5 3-5 3z" fill="#f0c030"/></svg>
<svg class="a" style="left:390px;top:423px" width="17" height="16" viewBox="0 0 17 16"><rect x="4.5" y="1.5" width="7" height="4" fill="#58c0a0" stroke="#206040"/><path d="M8 5.5v3M2.5 8.5h11M2.5 8.5v2M8 8.5v2M13.5 8.5v2" stroke="#206040"/><rect x="0.5" y="10.5" width="5" height="4" fill="#58c0a0" stroke="#206040"/><rect x="5.5" y="10.5" width="5" height="4" fill="#58c0a0" stroke="#206040"/><rect x="10.5" y="10.5" width="5" height="4" fill="#58c0a0" stroke="#206040"/><rect x="9.5" y="0.5" width="6" height="6" fill="#e04848" stroke="#a02020"/><path d="M11 2l3 3M14 2l-3 3" stroke="#fff"/></svg>
<svg class="a" style="left:366px;top:449px" width="14" height="16" viewBox="0 0 14 16"><rect x="0.5" y="1.5" width="12" height="14" rx="1" fill="#fbf8e0" stroke="#403c28"/><path d="M2 1.5h1M4 1.5h1M6 1.5h1M8 1.5h1M10 1.5h1" stroke="#fff"/><path d="M3 5.5h6M3 7.5h2M6 7.5h3M3 9.5h2M3 11.5h2" stroke="#1a1a1a"/><circle cx="7.5" cy="10.5" r="2.2" fill="#d8d820" stroke="#606010" stroke-width="0.8"/><circle cx="7.5" cy="10.5" r="0.7" fill="#404010"/></svg>
<div class="t" style="left:386.30px;top:448px;font-size:12px;font-weight:normal;color:#20206a;-webkit-text-stroke:0.25px currentColor;"><u>Census &amp; Provisioning Options</u></div>
<div class="a" style="left:364px;top:481px;width:340px;height:71px;border:1px solid #d6d9dc;border-radius:3px;"></div>
<div class="a" style="left:370px;top:479px;width:83px;height:5px;background:#fff;"></div>
<div class="t" style="left:373.40px;top:471px;font-size:12px;font-weight:normal;color:#000;transform:scaleX(0.9425);transform-origin:0 0;-webkit-text-stroke:0.25px currentColor;">Search Objects</div>
<div class="a" style="left:369px;top:490px;width:331px;height:59px;border:1px solid #8e9094;background:#fff;"></div>
<div class="a" style="left:376px;top:492px;width:136px;height:18px;border:1px dotted #333;background:#eef6fd;"></div>
<div class="t" style="left:376.90px;top:492px;font-size:12px;font-weight:normal;color:#000;transform:scaleX(0.9225);transform-origin:0 0;-webkit-text-stroke:0.25px currentColor;">SUSE Linux Search Object</div>
<div class="a" style="left:358px;top:556px;width:352px;height:24px;background:linear-gradient(180deg,#e1e8f0 0%,#eef2f7 50%,#ffffff 100%);border-top:1px solid #c4cad2;border-left:1px solid #d4d8de;border-right:1px solid #e4e8ee;border-radius:3px 3px 0 0;"></div>
<svg class="a" style="left:365px;top:565px" width="8" height="5" viewBox="0 0 8 5"><path d="M0 0H8L4 5Z" fill="#1a3a5e"/></svg>
<div class="t" style="left:379.00px;top:557px;font-size:12.4px;font-weight:bold;color:#183e6c;transform:scaleX(0.9441);transform-origin:0 0;">Core Drivers</div>
<svg class="a" style="left:366px;top:586px" width="15" height="15" viewBox="0 0 15 15"><defs><linearGradient id="yy366_586a" x1="0" y1="0" x2="1" y2="1"><stop offset="0" stop-color="#9a9a9a"/><stop offset="0.5" stop-color="#222"/><stop offset="1" stop-color="#000"/></linearGradient><linearGradient id="yy366_586b" x1="0" y1="0" x2="1" y2="1"><stop offset="0" stop-color="#fff"/><stop offset="0.6" stop-color="#f4f4f4"/><stop offset="1" stop-color="#b8b8b8"/></linearGradient></defs><g transform="scale(0.9375)"><circle cx="8" cy="8" r="7.4" fill="url(#yy366_586b)" stroke="#555" stroke-width="0.6"/><path d="M8 0.6 A7.4 7.4 0 0 0 8 15.4 A3.7 3.7 0 0 0 8 8 A3.7 3.7 0 0 1 8 0.6Z" fill="url(#yy366_586a)"/><circle cx="8" cy="4.3" r="1.1" fill="#111"/><circle cx="8" cy="11.7" r="1.1" fill="#fff"/></g></svg>
<svg class="a" style="left:374px;top:586px" width="9" height="9" viewBox="0 0 9 9"><path d="M4.5 0.5L5.6 3.4 8.5 4.5 5.6 5.6 4.5 8.5 3.4 5.6 0.5 4.5 3.4 3.4Z" fill="#f0c060" stroke="#a07020" stroke-width="0.7"/></svg>
<svg class="a" style="left:389px;top:586px" width="15" height="15" viewBox="0 0 15 15"><defs><linearGradient id="yy389_586a" x1="0" y1="0" x2="1" y2="1"><stop offset="0" stop-color="#9a9a9a"/><stop offset="0.5" stop-color="#222"/><stop offset="1" stop-color="#000"/></linearGradient><linearGradient id="yy389_586b" x1="0" y1="0" x2="1" y2="1"><stop offset="0" stop-color="#fff"/><stop offset="0.6" stop-color="#f4f4f4"/><stop offset="1" stop-color="#b8b8b8"/></linearGradient></defs><g transform="scale(0.9375)"><circle cx="8" cy="8" r="7.4" fill="url(#yy389_586b)" stroke="#555" stroke-width="0.6"/><path d="M8 0.6 A7.4 7.4 0 0 0 8 15.4 A3.7 3.7 0 0 0 8 8 A3.7 3.7 0 0 1 8 0.6Z" fill="url(#yy389_586a)"/><circle cx="8" cy="4.3" r="1.1" fill="#111"/><circle cx="8" cy="11.7" r="1.1" fill="#fff"/></g></svg>
<svg class="a" style="left:398px;top:585px" width="8" height="8" viewBox="0 0 8 8"><rect x="0" y="0" width="7" height="7.5" fill="#d04060"/><path d="M1.5 1.5l4 4.5M5.5 1.5l-4 4.5" stroke="#ffe0e8" stroke-width="1.3"/></svg>
<div class="a" style="left:364px;top:613px;width:340px;height:73px;border:1px solid #d6d9dc;border-radius:3px;"></div>
<div class="a" style="left:370px;top:611px;width:69px;height:5px;background:#fff;"></div>
<div class="t" style="left:373.40px;top:604px;font-size:12px;font-weight:normal;color:#000;transform:scaleX(0.9403);transform-origin:0 0;-webkit-text-stroke:0.25px currentColor;">Core Drivers</div>
<div class="a" style="left:373px;top:624px;width:136px;height:18px;background:linear-gradient(180deg,#fafafa,#e6e6e6);border:1px solid #d0d0d0;border-radius:2px;"></div>
<div class="t" style="left:375.30px;top:623px;font-size:12px;font-weight:normal;color:#000;transform:scaleX(0.9681);transform-origin:0 0;-webkit-text-stroke:0.25px currentColor;">Acme Core Driver</div>
<div class="a" style="left:358px;top:689px;width:352px;height:24px;background:linear-gradient(180deg,#e1e8f0 0%,#eef2f7 50%,#ffffff 100%);border-top:1px solid #c4cad2;border-left:1px solid #d4d8de;border-right:1px solid #e4e8ee;border-radius:3px 3px 0 0;"></div>
<svg class="a" style="left:365px;top:698px" width="8" height="5" viewBox="0 0 8 5"><path d="M0 0H8L4 5Z" fill="#1a3a5e"/></svg>
<div class="t" style="left:379.00px;top:689px;font-size:12.4px;font-weight:bold;color:#183e6c;transform:scaleX(0.9565);transform-origin:0 0;">Platform Sets &amp; Platforms</div>
<svg class="a" style="left:368px;top:718px" width="16" height="16" viewBox="0 0 16 16"><rect x="0.5" y="1.5" width="11" height="13" fill="#f0e8b0" stroke="#605020"/><path d="M3 5h5M3 8h5M3 11h5" stroke="#605020"/><path d="M9 6h6M9 10h6" stroke="#20a050" stroke-width="2"/></svg>
<svg class="a" style="left:391px;top:724px" width="7" height="4" viewBox="0 0 7 4"><path d="M0 0H7L3.5 4Z" fill="#111"/></svg>
<svg class="a" style="left:405px;top:718px" width="17" height="16" viewBox="0 0 17 16"><rect x="1.5" y="1.5" width="10" height="8" fill="#3050b0" stroke="#202040"/><path d="M0 12l5 3h11l-4-3z" fill="#c8c8d8" stroke="#404060"/><path d="M13 2v5M10.5 4.5h5" stroke="#e8b020" stroke-width="1.6"/></svg>
<svg class="a" style="left:428px;top:718px" width="17" height="16" viewBox="0 0 17 16"><rect x="4.5" y="1.5" width="7" height="4" fill="#58c0a0" stroke="#206040"/><path d="M8 5.5v3M2.5 8.5h11M2.5 8.5v2M8 8.5v2M13.5 8.5v2" stroke="#206040"/><rect x="0.5" y="10.5" width="5" height="4" fill="#58c0a0" stroke="#206040"/><rect x="5.5" y="10.5" width="5" height="4" fill="#58c0a0" stroke="#206040"/><rect x="10.5" y="10.5" width="5" height="4" fill="#58c0a0" stroke="#206040"/><path d="M10 1l5 3-5 3z" fill="#f0c030"/></svg>
<svg class="a" style="left:450px;top:718px" width="17" height="16" viewBox="0 0 17 16"><rect x="0.5" y="2.5" width="16" height="12" fill="#e8e8e8" stroke="#a8a8a8"/><rect x="2.5" y="5.5" width="5" height="6" fill="#d0d0d0" stroke="#a0a0a0"/><path d="M9 6h6M9 8h6M9 10h6" stroke="#a0a0a0"/></svg>
<div class="a" style="left:473px;top:717px;width:1px;height:18px;background:#a0a0a0;"></div>
<svg class="a" style="left:484px;top:719px" width="14" height="14" viewBox="0 0 14 14"><path d="M2 2L12 12M12 2L2 12" stroke="#d82020" stroke-width="3.2"/></svg>
<svg class="a" style="left:505px;top:718px" width="16" height="16" viewBox="0 0 16 16"><circle cx="4" cy="11" r="2.5" fill="none" stroke="#a8a8a8" stroke-width="1.3"/><circle cx="11" cy="12" r="2.5" fill="none" stroke="#a8a8a8" stroke-width="1.3"/><path d="M5 9l8-8M10 10L6 1" stroke="#a8a8a8" stroke-width="1.3"/></svg>
<svg class="a" style="left:528px;top:718px" width="16" height="16" viewBox="0 0 16 16"><path d="M1 15l2-5 9-9 3 3-9 9z" fill="#e8b848" stroke="#805010"/><path d="M1 15l2-5 3 3z" fill="#404040"/></svg>
<div class="a" style="left:364px;top:746px;width:340px;height:73px;border:1px solid #d6d9dc;border-radius:3px;"></div>
<div class="a" style="left:370px;top:744px;width:75px;height:5px;background:#fff;"></div>
<div class="t" style="left:373.40px;top:737px;font-size:12px;font-weight:normal;color:#000;transform:scaleX(0.9653);transform-origin:0 0;-webkit-text-stroke:0.25px currentColor;">Platform Sets</div>
<div class="t" style="left:412.50px;top:755px;font-size:12px;font-weight:normal;color:#000;transform:scaleX(0.9273);transform-origin:0 0;-webkit-text-stroke:0.25px currentColor;">SUSE Linux Platform Set</div>
<div class="t" style="left:431.40px;top:773px;font-size:12px;font-weight:bold;color:#000;transform:scaleX(0.9689);transform-origin:0 0;">Platforms</div>
<div class="a" style="left:446px;top:793px;width:114px;height:17px;background:linear-gradient(180deg,#fafafa,#e6e6e6);border:1px solid #d0d0d0;border-radius:2px;"></div>
<div class="t" style="left:450.30px;top:791px;font-size:12px;font-weight:normal;color:#000;transform:scaleX(0.9340);transform-origin:0 0;-webkit-text-stroke:0.25px currentColor;">SUSE Linux Platform</div>
<div class="a" style="left:433px;top:814px;width:4px;height:1px;background:#333;"></div>
<div class="a" style="left:463px;top:814px;width:1px;height:1px;background:#333;"></div>
<div class="a" style="left:475px;top:814px;width:5px;height:1px;background:#333;"></div>
<div class="a" style="left:483px;top:814px;width:1px;height:1px;background:#333;"></div>
<div class="a" style="left:490px;top:814px;width:1px;height:1px;background:#333;"></div>
<div class="a" style="left:358px;top:823px;width:352px;height:24px;background:linear-gradient(180deg,#e1e8f0 0%,#eef2f7 50%,#ffffff 100%);border-top:1px solid #c4cad2;border-left:1px solid #d4d8de;border-right:1px solid #e4e8ee;border-radius:3px 3px 0 0;"></div>
<svg class="a" style="left:365px;top:832px" width="8" height="5" viewBox="0 0 8 5"><path d="M0 0H8L4 5Z" fill="#1a3a5e"/></svg>
<div class="t" style="left:379.00px;top:823px;font-size:12.4px;font-weight:bold;color:#183e6c;transform:scaleX(0.9894);transform-origin:0 0;">UID/GID Sets</div>
<svg class="a" style="left:366px;top:852px" width="17" height="15" viewBox="0 0 17 15"><rect x="0.5" y="2.5" width="16" height="12" fill="#fff" stroke="#202020"/><circle cx="5" cy="7" r="2" fill="#202020"/><path d="M2 12c0-3 6-3 6 0" fill="#208060"/><rect x="10" y="4" width="5" height="9" fill="#40a0a0"/><path d="M12.5 0v5M10 2.5h5" stroke="#e8b020" stroke-width="1.5"/></svg>
<svg class="a" style="left:389px;top:852px" width="17" height="15" viewBox="0 0 17 15"><rect x="0.5" y="2.5" width="16" height="12" fill="#fff" stroke="#202020"/><circle cx="5" cy="7" r="2" fill="#202020"/><path d="M2 12c0-3 6-3 6 0" fill="#606060"/><rect x="10" y="4" width="5" height="9" fill="#a0a0a0"/><path d="M11 0l4 4M15 0l-4 4" stroke="#606060" stroke-width="1.2"/></svg>
<div class="a" style="left:364px;top:879px;width:340px;height:72px;border:1px solid #d6d9dc;border-radius:3px;"></div>
<div class="a" style="left:370px;top:877px;width:72px;height:5px;background:#fff;"></div>
<div class="t" style="left:373.40px;top:870px;font-size:12px;font-weight:normal;color:#000;transform:scaleX(0.9083);transform-origin:0 0;-webkit-text-stroke:0.25px currentColor;">UID/GID Sets</div>
<div class="t" style="left:375.50px;top:889px;font-size:12px;font-weight:normal;color:#000;transform:scaleX(0.8849);transform-origin:0 0;-webkit-text-stroke:0.25px currentColor;">SUSE Linux UID GID Set</div>
<div class="a" style="left:725px;top:394px;width:529px;height:24px;background:linear-gradient(180deg,#e1e8f0 0%,#eef2f7 50%,#ffffff 100%);border-top:1px solid #c4cad2;border-left:1px solid #d4d8de;border-right:1px solid #e4e8ee;border-radius:3px 3px 0 0;"></div>
<div class="t" style="left:730.30px;top:395px;font-size:12.4px;font-weight:bold;color:#183e6c;transform:scaleX(0.9459);transform-origin:0 0;">Properties</div>
<div class="a" style="left:731px;top:421px;width:514px;height:22px;background:linear-gradient(180deg,#ffffff,#f0f0f0);border-bottom:1px solid #d5d5d5;"></div>
<div class="a" style="left:970px;top:421px;width:1px;height:21px;background:#e2e2e2;"></div>
<div class="a" style="left:1202px;top:421px;width:1px;height:21px;background:#e2e2e2;"></div>
<div class="a" style="left:1220px;top:421px;width:1px;height:21px;background:#e2e2e2;"></div>
<div class="a" style="left:1238px;top:421px;width:1px;height:21px;background:#e2e2e2;"></div>
<div class="t" style="left:738.40px;top:422px;font-size:12px;font-weight:normal;color:#000;transform:scaleX(0.9863);transform-origin:0 0;-webkit-text-stroke:0.25px currentColor;">Name</div>
<div class="t" style="left:977.50px;top:422px;font-size:12px;font-weight:normal;color:#000;transform:scaleX(0.9490);transform-origin:0 0;-webkit-text-stroke:0.25px currentColor;">Value</div>
<div class="a" style="left:731px;top:459px;width:515px;height:1px;background:#e6e6e6;"></div>
<div class="a" style="left:731px;top:477px;width:515px;height:1px;background:#e6e6e6;"></div>
<div class="a" style="left:731px;top:495px;width:515px;height:1px;background:#e6e6e6;"></div>
<div class="a" style="left:731px;top:513px;width:515px;height:1px;background:#e6e6e6;"></div>
<div class="a" style="left:731px;top:531px;width:515px;height:1px;background:#e6e6e6;"></div>
<div class="a" style="left:731px;top:549px;width:515px;height:1px;background:#e6e6e6;"></div>
<div class="a" style="left:731px;top:567px;width:515px;height:1px;background:#e6e6e6;"></div>
<div class="a" style="left:731px;top:585px;width:515px;height:1px;background:#e6e6e6;"></div>
<div class="a" style="left:731px;top:603px;width:515px;height:1px;background:#e6e6e6;"></div>
<div class="a" style="left:731px;top:621px;width:515px;height:1px;background:#e6e6e6;"></div>
<div class="a" style="left:731px;top:639px;width:515px;height:1px;background:#e6e6e6;"></div>
<div class="a" style="left:731px;top:657px;width:515px;height:1px;background:#e6e6e6;"></div>
<div class="a" style="left:731px;top:675px;width:515px;height:1px;background:#e6e6e6;"></div>
<div class="a" style="left:731px;top:693px;width:515px;height:1px;background:#e6e6e6;"></div>
<div class="a" style="left:731px;top:711px;width:515px;height:1px;background:#e6e6e6;"></div>
<div class="a" style="left:731px;top:729px;width:515px;height:1px;background:#e6e6e6;"></div>
<div class="a" style="left:731px;top:747px;width:515px;height:1px;background:#e6e6e6;"></div>
<div class="a" style="left:731px;top:765px;width:515px;height:1px;background:#e6e6e6;"></div>
<div class="a" style="left:731px;top:783px;width:515px;height:1px;background:#e6e6e6;"></div>
<div class="a" style="left:731px;top:801px;width:515px;height:1px;background:#e6e6e6;"></div>
<div class="a" style="left:731px;top:819px;width:515px;height:1px;background:#e6e6e6;"></div>
<div class="a" style="left:731px;top:837px;width:515px;height:1px;background:#e6e6e6;"></div>
<div class="a" style="left:731px;top:855px;width:515px;height:1px;background:#e6e6e6;"></div>
<div class="a" style="left:731px;top:873px;width:515px;height:1px;background:#e6e6e6;"></div>
<div class="a" style="left:731px;top:891px;width:515px;height:1px;background:#e6e6e6;"></div>
<div class="a" style="left:731px;top:909px;width:515px;height:1px;background:#e6e6e6;"></div>
<div class="a" style="left:731px;top:927px;width:515px;height:1px;background:#e6e6e6;"></div>
<div class="a" style="left:731px;top:945px;width:515px;height:1px;background:#e6e6e6;"></div>
<div class="a" style="left:731px;top:963px;width:515px;height:1px;background:#e6e6e6;"></div>
<div class="a" style="left:968px;top:443px;width:1px;height:521px;background:#e0e0e0;"></div>
<div class="a" style="left:1202px;top:443px;width:1px;height:521px;background:#e0e0e0;"></div>
<div class="a" style="left:1220px;top:443px;width:1px;height:521px;background:#e0e0e0;"></div>
<div class="a" style="left:1238px;top:443px;width:1px;height:521px;background:#e0e0e0;"></div>
<div class="t" style="left:754.50px;top:441px;font-size:12px;font-weight:normal;color:#000;transform:scaleX(0.9863);transform-origin:0 0;-webkit-text-stroke:0.25px currentColor;">Name</div>
<div class="t" style="left:974.30px;top:441px;font-size:12px;font-weight:normal;color:#000;transform:scaleX(0.9204);transform-origin:0 0;-webkit-text-stroke:0.25px currentColor;">SUSE Linux Search Object</div>
<div class="t" style="left:754.50px;top:459px;font-size:12px;font-weight:normal;color:#000;transform:scaleX(0.9497);transform-origin:0 0;-webkit-text-stroke:0.25px currentColor;">Expand Groups And Roles</div>
<div class="t" style="left:974.30px;top:459px;font-size:12px;font-weight:normal;color:#000;transform:scaleX(0.9360);transform-origin:0 0;-webkit-text-stroke:0.25px currentColor;">false</div>
<div class="t" style="left:754.50px;top:477px;font-size:12px;font-weight:normal;color:#000;transform:scaleX(0.9002);transform-origin:0 0;-webkit-text-stroke:0.25px currentColor;">FDN</div>
<div class="t" style="left:974.30px;top:477px;font-size:12px;font-weight:normal;color:#000;transform:scaleX(0.9963);transform-origin:0 0;-webkit-text-stroke:0.25px currentColor;">ou=users,o=acme</div>
<div class="t" style="left:754.50px;top:495px;font-size:12px;font-weight:normal;color:#000;transform:scaleX(0.9341);transform-origin:0 0;-webkit-text-stroke:0.25px currentColor;">In Census</div>
<div class="t" style="left:974.30px;top:495px;font-size:12px;font-weight:normal;color:#000;transform:scaleX(0.9952);transform-origin:0 0;-webkit-text-stroke:0.25px currentColor;">true</div>
<div class="t" style="left:754.50px;top:513px;font-size:12px;font-weight:normal;color:#000;transform:scaleX(0.9658);transform-origin:0 0;-webkit-text-stroke:0.25px currentColor;">Include Aliases</div>
<div class="t" style="left:974.30px;top:513px;font-size:12px;font-weight:normal;color:#000;transform:scaleX(0.9360);transform-origin:0 0;-webkit-text-stroke:0.25px currentColor;">false</div>
<div class="t" style="left:754.50px;top:531px;font-size:12px;font-weight:normal;color:#000;transform:scaleX(0.9747);transform-origin:0 0;-webkit-text-stroke:0.25px currentColor;">Include Groups</div>
<div class="t" style="left:974.30px;top:531px;font-size:12px;font-weight:normal;color:#000;transform:scaleX(0.9952);transform-origin:0 0;-webkit-text-stroke:0.25px currentColor;">true</div>
<div class="t" style="left:754.50px;top:549px;font-size:12px;font-weight:normal;color:#000;transform:scaleX(0.9430);transform-origin:0 0;-webkit-text-stroke:0.25px currentColor;">Include Users</div>
<div class="t" style="left:974.30px;top:549px;font-size:12px;font-weight:normal;color:#000;transform:scaleX(0.9952);transform-origin:0 0;-webkit-text-stroke:0.25px currentColor;">true</div>
<div class="t" style="left:754.50px;top:567px;font-size:12px;font-weight:normal;color:#000;transform:scaleX(0.9389);transform-origin:0 0;-webkit-text-stroke:0.25px currentColor;">Search Depth</div>
<div class="t" style="left:974.30px;top:567px;font-size:12px;font-weight:normal;color:#000;transform:scaleX(0.7958);transform-origin:0 0;-webkit-text-stroke:0.25px currentColor;">0</div>
<svg class="a" style="left:1203px;top:478px" width="16" height="17" viewBox="0 0 16 17"><ellipse cx="8" cy="6" rx="7" ry="5.5" fill="#30a030" stroke="#105010"/><circle cx="5" cy="4" r="1.5" fill="#80d080"/><path d="M8 10v6M5 16h6" stroke="#604020" stroke-width="2"/></svg>
<div class="a" style="left:350px;top:971px;width:914px;height:20px;background:#f0f0f0;border-top:1px solid #a0a0a0;"></div>
<div class="a" style="left:350px;top:971px;width:81px;height:20px;background:#fff;border-right:1px solid #a0a0a0;"></div>
<div class="t" style="left:354.60px;top:971px;font-size:12px;font-weight:normal;color:#000;transform:scaleX(1.0224);transform-origin:0 0;-webkit-text-stroke:0.25px currentColor;">Configuration</div>
<div class="a" style="left:8px;top:994px;width:1263px;height:26px;background:#f0f0f0;"></div>
<div class="a" style="left:17px;top:996px;width:2px;height:22px;background:repeating-linear-gradient(180deg,#a0a0a0 0 2px,transparent 2px 4px);"></div>
<div class="a" style="left:26px;top:996px;width:146px;height:22px;border:1px solid #a0a0a0;border-bottom:none;border-right:none;background:#f0f0f0;"></div>
<div class="a" style="left:157px;top:997px;width:1px;height:21px;background:#8a8a8a;"></div>
<div class="a" style="left:27px;top:997px;width:68px;height:21px;background:#fefee0;"></div>
<div class="a" style="left:95px;top:997px;width:1px;height:21px;background:#787878;"></div>
<div class="t" style="left:61.00px;top:997px;font-size:12px;font-weight:normal;color:#000;transform:scaleX(0.9864);transform-origin:0 0;-webkit-text-stroke:0.25px currentColor;">24M of 45M</div>
<svg class="a" style="left:159px;top:998px" width="13" height="17" viewBox="0 0 13 17"><defs><linearGradient id="trg" x1="0" y1="0" x2="1" y2="0"><stop offset="0" stop-color="#2a6a7a"/><stop offset="0.5" stop-color="#8ad8e8"/><stop offset="1" stop-color="#2a6a7a"/></linearGradient></defs><path d="M1.5 4.5h10l-1 11h-8z" fill="url(#trg)" stroke="#1a4a5a"/><path d="M0.5 3h12" stroke="#3a8a9a" stroke-width="2"/><rect x="4.5" y="0.5" width="4" height="2" fill="#3a8a9a"/><path d="M4.5 6v8M6.5 6v8M8.5 6v8" stroke="#c8f0f8" stroke-width="0.8"/></svg>
<div class="a" style="left:181px;top:996px;width:2px;height:22px;background:repeating-linear-gradient(180deg,#a0a0a0 0 2px,transparent 2px 4px);"></div>
<svg class="a" style="left:194px;top:998px" width="16" height="16" viewBox="0 0 16 16"><rect x="1.5" y="4.5" width="5" height="10" fill="#fcfcf4" stroke="#606060"/><rect x="2" y="5" width="4" height="2" fill="#4060a0"/><path d="M11.5 2L13.5 5 16 5.5 13.5 6 11.5 9 9.5 6 7 5.5 9.5 5Z" fill="#f8e060" stroke="#b08010" stroke-width="0.8"/></svg>
<div class="a" style="left:631px;top:996px;width:1px;height:22px;background:#8a8a8a;"></div>
<div class="a" style="left:735px;top:996px;width:1px;height:22px;background:#8a8a8a;"></div>
<div class="a" style="left:833px;top:996px;width:1px;height:22px;background:#8a8a8a;"></div>
<div class="a" style="left:1253px;top:996px;width:1px;height:22px;background:#8a8a8a;"></div>
<div class="a" style="left:936px;top:996px;width:2px;height:22px;background:repeating-linear-gradient(180deg,#a0a0a0 0 2px,transparent 2px 4px);"></div>
<div class="a" style="left:1234px;top:996px;width:2px;height:22px;background:repeating-linear-gradient(180deg,#a0a0a0 0 2px,transparent 2px 4px);"></div>
</body></html>
